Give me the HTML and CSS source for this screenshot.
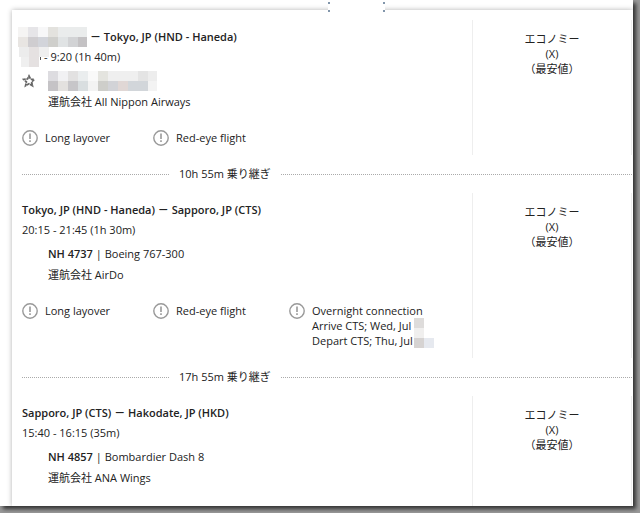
FILE: index.html
```
<!DOCTYPE html>
<html lang="ja">
<head>
    <meta charset="UTF-8">
    <meta name="viewport" content="width=device-width, initial-scale=1.0">
    <title>Flight details</title>
    <link rel="stylesheet" href="styles.css">
</head>
<body>
    <svg width="0" height="0" class="symbols">
        <symbol id="alert" viewBox="0 0 16 16">
            <circle cx="8" cy="8" r="7.2" fill="none" stroke="#999" stroke-width="1.4"/>
            <path d="M8 3.6v5.4" stroke="#999" stroke-width="1.6"/>
            <path d="M8 10.3v1.7" stroke="#999" stroke-width="1.6"/>
        </symbol>
    </svg>
    <main class="page">
        <div class="card">
            <div class="tab"></div>

            <section class="segment first">
                <div class="flight">
                    <h2 class="route">
                        <svg class="mask" width="69" height="20" shape-rendering="crispEdges">
                            <path fill="#f5f4f3" d="M0 0h10v10H0z"/><path fill="#e6e5e8" d="M10 0h10v10H10z"/><path fill="#f7f7f8" d="M20 0h10v10H20z"/><path fill="#e3e2de" d="M30 0h10v10H30z"/><path fill="#eaecec" d="M40 0h29v10H40z"/>
                            <path fill="#e8e5e2" d="M0 10h10v10H0z"/><path fill="#cfcdd0" d="M10 10h10v10H10z"/><path fill="#d2d4da" d="M20 10h10v10H20z"/><path fill="#cfcfcc" d="M30 10h10v10H30z"/><path fill="#e0e3e4" d="M40 10h10v10H40z"/><path fill="#d2d3d5" d="M50 10h10v10H50z"/><path fill="#c4c2c4" d="M60 10h9v10H60z"/>
                        </svg>
                        <span>－ Tokyo, JP (HND - Haneda)</span>
                    </h2>
                    <p class="time">
                        <svg class="mask" width="30" height="20" shape-rendering="crispEdges">
                            <path fill="#ececec" d="M0 0h10v10H0z"/><path fill="#e5e1e1" d="M10 0h10v20H10z"/><path fill="#efefef" d="M20 0h10v10H20zM2 10h8v10H2z"/>
                            <path d="M22 10l-1 3" stroke="#555"/>
                        </svg>
                        <span>- 9:20 (1h 40m)</span>
                    </p>
                    <div class="carrier">
                        <svg class="star" width="14" height="14" viewBox="0 0 14 14">
                            <path d="M7 2l1.5 3 3.7.4-2.6 2.5.8 3.8L7 9.8l-3.4 1.9.8-3.8L1.8 5.4 5.5 5z" fill="none" stroke="#666" stroke-width="1.8" stroke-dasharray="3 .6"/>
                        </svg>
                        <svg class="mask" width="109" height="20" shape-rendering="crispEdges">
                            <path fill="#dddce0" d="M0 0h10v10H0z"/><path fill="#f1f1f3" d="M10 0h10v10H10z"/><path fill="#e2e1e1" d="M20 0h10v10H20z"/><path fill="#eaedee" d="M30 0h10v10H30z"/><path fill="#f9f9f9" d="M40 0h10v10H40z"/><path fill="#e4e4df" d="M50 0h10v10H50z"/><path fill="#efefef" d="M60 0h30v10H60z"/><path fill="#e4e4e4" d="M90 0h10v10H90z"/><path fill="#ededed" d="M100 0h9v10H100z"/>
                            <path fill="#c5c3c6" d="M0 10h10v10H0z"/><path fill="#e3e1df" d="M10 10h10v10H10z"/><path fill="#c7c6c9" d="M20 10h10v10H20z"/><path fill="#d9dee0" d="M30 10h10v10H30z"/><path fill="#f3f3f3" d="M40 10h10v10H40z"/><path fill="#cececa" d="M50 10h10v10H50z"/><path fill="#d2d3d7" d="M60 10h10v10H60z"/><path fill="#e0d7d5" d="M70 10h10v10H70z"/><path fill="#d2d6da" d="M80 10h20v10H80z"/><path fill="#f3f3f3" d="M100 10h9v10H100z"/>
                        </svg>
                    </div>
                    <p class="operator">運航会社 All Nippon Airways</p>
                    <ul class="notices">
                        <li><svg class="icon"><use href="#alert"/></svg>Long layover</li>
                        <li><svg class="icon"><use href="#alert"/></svg>Red-eye flight</li>
                    </ul>
                </div>
                <div class="cabin">エコノミー<br>(X)<br>（最安値）</div>
            </section>

            <div class="layover">10h 55m 乗り継ぎ</div>

            <section class="segment">
                <div class="flight">
                    <h2 class="route">Tokyo, JP (HND - Haneda) － Sapporo, JP (CTS)</h2>
                    <p class="time">20:15 - 21:45 (1h 30m)</p>
                    <p class="carrier"><b>NH 4737</b>&nbsp;| Boeing 767-300</p>
                    <p class="operator">運航会社 AirDo</p>
                    <ul class="notices">
                        <li><svg class="icon"><use href="#alert"/></svg>Long layover</li>
                        <li><svg class="icon"><use href="#alert"/></svg>Red-eye flight</li>
                        <li>
                            <svg class="icon"><use href="#alert"/></svg>
                            <div>Overnight connection<br>Arrive CTS; Wed, Jul<br>Depart CTS; Thu, Jul</div>
                            <svg class="mask dates" width="20" height="30" shape-rendering="crispEdges">
                                <path fill="#dedcdb" d="M0 0h10v10H0z"/><path fill="#f0efee" d="M0 10h10v10H0z"/><path fill="#d6d3d2" d="M0 20h10v10H0z"/><path fill="#e6e9ef" d="M10 20h10v10H10z"/>
                            </svg>
                        </li>
                    </ul>
                </div>
                <div class="cabin">エコノミー<br>(X)<br>（最安値）</div>
            </section>

            <div class="layover">17h 55m 乗り継ぎ</div>

            <section class="segment last">
                <div class="flight">
                    <h2 class="route">Sapporo, JP (CTS) － Hakodate, JP (HKD)</h2>
                    <p class="time">15:40 - 16:15 (35m)</p>
                    <p class="carrier"><b>NH 4857</b>&nbsp;| Bombardier Dash 8</p>
                    <p class="operator">運航会社 ANA Wings</p>
                </div>
                <div class="cabin">エコノミー<br>(X)<br>（最安値）</div>
            </section>
        </div>
    </main>
</body>
</html>
```
FILE: styles.css
```
* {
    box-sizing: border-box;
}
body {
    margin: 0;
    min-height: 100vh;
    display: flex;
    padding: 0 7px 7px 0;
    background: #999;
    font-family: "Open Sans", "Noto Sans CJK JP", sans-serif;
    font-size: 11px;
    line-height: 16px;
    color: #222;
    overflow: hidden;
}
.symbols {
    position: absolute;
}
.page {
    flex: 1;
    display: flex;
    padding: 10px 0 0 12px;
    background: #fff;
    box-shadow: 3px 3px 4px #333;
}
.card {
    position: relative;
    flex: 1;
    display: flex;
    flex-direction: column;
    padding: 10px 1px 0 10px;
    box-shadow: 0 0 5px rgba(0, 0, 0, 0.3);
    clip-path: inset(-10px 0 0 -8px);
}
.tab {
    position: absolute;
    top: -10px;
    left: 316px;
    width: 57px;
    height: 12px;
    background: #fff;
}
.tab::before, .tab::after {
    content: "";
    position: absolute;
    top: 2px;
    left: 0;
    width: 2px;
    height: 6px;
    border: solid #8296ab;
    border-width: 2px 0;
}
.tab::after {
    left: auto;
    right: 0;
}
.segment {
    display: flex;
}
.flight {
    flex: 1;
    padding: 8px 0 10px;
}
.first .flight {
    padding-bottom: 9px;
}
.last {
    flex: 1;
}
.cabin {
    width: 160px;
    padding-top: 11px;
    border: solid #eee;
    border-width: 0 1px;
    text-align: center;
    line-height: 15px;
}
.route, .time, .carrier, .operator {
    display: flex;
    align-items: center;
    margin: 0;
    font-size: 11px;
    height: 20px;
    white-space: nowrap;
}
.route, .carrier b {
    font-weight: 600;
}
.route {
    height: 18px;
}
.time {
    height: 21px;
}
.carrier, .operator {
    position: relative;
    padding-left: 26px;
}
.carrier {
    margin-top: 4px;
}
.operator {
    height: 21px;
}
.mask {
    flex: none;
}
.route .mask {
    margin: 0 3px 0 -4px;
}
.time .mask {
    margin: 0 -5px 0 -3px;
}
.star {
    position: absolute;
    left: 0;
}
.notices {
    display: flex;
    list-style: none;
    margin: 18px 0 0;
    padding: 0;
    line-height: 15px;
}
.notices li {
    display: flex;
    width: 136px;
    white-space: nowrap;
}
.notices li:first-child {
    width: 131px;
}
.icon {
    flex: none;
    width: 16px;
    height: 16px;
    margin-right: 7px;
}
.dates {
    margin: 15px 0 0 -9px;
}
.layover {
    display: flex;
    align-items: center;
    gap: 10px;
    height: 38px;
}
.layover::before, .layover::after {
    content: "";
    width: 147px;
    border-top: 1px dotted #aaa;
}
.layover::after {
    flex: 1;
}
```
